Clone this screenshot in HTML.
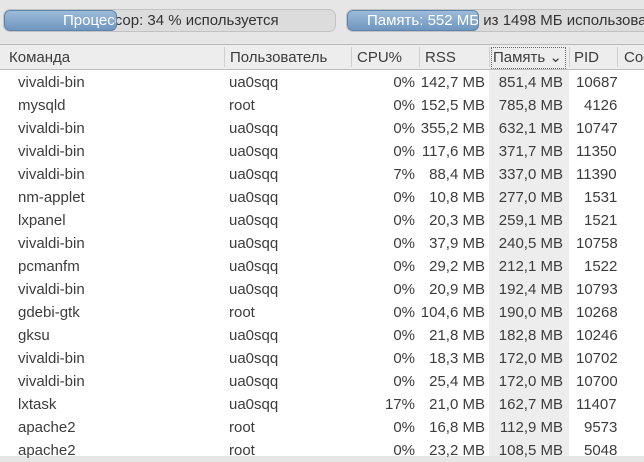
<!DOCTYPE html><html><head><meta charset="utf-8"><style>
body{margin:0;width:644px;height:455px;background:#e6e6e6;font-family:"Liberation Sans","DejaVu Sans",sans-serif;font-size:15px;color:#3c3c3c;overflow:hidden;position:relative}
.bar{position:absolute;top:9px;height:23px;border:1px solid #c2c2c2;border-radius:7px;background:#dcdcdc;overflow:hidden;box-sizing:border-box}
.fill{position:absolute;left:0;top:0;bottom:0;border-radius:6px;background:linear-gradient(#9dbbd9,#6f96bf);border:1px solid #5f84ad;box-sizing:border-box;overflow:hidden}
.lbl{position:absolute;top:2px;white-space:nowrap;color:#333}
.fill .lbl{color:#fff;top:1px}
.tbl{position:absolute;left:0;top:44px;width:644px;height:411px;background:#fff;border-top:1px solid #bbb}
.hdr{position:absolute;left:0;top:0;width:644px;height:24px;background:#ededed;border-bottom:1px solid #bdbdbd}
.h{position:absolute;top:4px}
.sep{position:absolute;top:2px;height:20px;border-left:1px solid #cfcfcf}
.sortbg{position:absolute;left:489px;width:80px;top:25px;bottom:0;background:#ededed}
.r{position:absolute;left:0;width:644px;height:23px}
.r span{position:absolute;top:3px;white-space:nowrap}
</style></head><body>
<div class="bar" style="left:3px;width:333px"><div class="lbl" style="left:59px">Процессор: 34 % используется</div><div class="fill" style="width:113px"><div class="lbl" style="left:58px">Процессор: 34 % используется</div></div></div>
<div class="bar" style="left:346px;width:310px"><div class="lbl" style="left:20px">Память: 552 МБ из 1498 МБ использовано</div><div class="fill" style="width:132px"><div class="lbl" style="left:19px">Память: 552 МБ из 1498 МБ использовано</div></div></div>
<div class="tbl">
<div class="sortbg"></div>
<div class="hdr">
<span class="h" style="left:9px">Команда</span>
<div class="sep" style="left:224px"></div><span class="h" style="left:230px">Пользователь</span>
<div class="sep" style="left:351px"></div><span class="h" style="left:357px">CPU%</span>
<div class="sep" style="left:419px"></div><span class="h" style="left:425px">RSS</span>
<div class="sep" style="left:489px"></div><span class="h" style="left:492px;outline:1px dotted #666;padding:0 3px 2px 1px;top:3px">Память ⌄</span>
<div class="sep" style="left:569px"></div><span class="h" style="left:574px">PID</span>
<div class="sep" style="left:617px"></div><span class="h" style="left:624px">Сос</span>
</div>
</div>
<div style="position:absolute;left:0;top:71px;width:644px">
<div class="r" style="top:0"><span style="left:18px">vivaldi-bin</span><span style="left:229px">ua0sqq</span><span style="right:229px">0%</span><span style="right:159px">142,7 MB</span><span style="right:81px">851,4 MB</span><span style="left:576px">10687</span></div>
<div class="r" style="top:23px"><span style="left:18px">mysqld</span><span style="left:229px">root</span><span style="right:229px">0%</span><span style="right:159px">152,5 MB</span><span style="right:81px">785,8 MB</span><span style="left:584px">4126</span></div>
<div class="r" style="top:46px"><span style="left:18px">vivaldi-bin</span><span style="left:229px">ua0sqq</span><span style="right:229px">0%</span><span style="right:159px">355,2 MB</span><span style="right:81px">632,1 MB</span><span style="left:576px">10747</span></div>
<div class="r" style="top:69px"><span style="left:18px">vivaldi-bin</span><span style="left:229px">ua0sqq</span><span style="right:229px">0%</span><span style="right:159px">117,6 MB</span><span style="right:81px">371,7 MB</span><span style="left:576px">11350</span></div>
<div class="r" style="top:92px"><span style="left:18px">vivaldi-bin</span><span style="left:229px">ua0sqq</span><span style="right:229px">7%</span><span style="right:159px">88,4 MB</span><span style="right:81px">337,0 MB</span><span style="left:576px">11390</span></div>
<div class="r" style="top:115px"><span style="left:18px">nm-applet</span><span style="left:229px">ua0sqq</span><span style="right:229px">0%</span><span style="right:159px">10,8 MB</span><span style="right:81px">277,0 MB</span><span style="left:584px">1531</span></div>
<div class="r" style="top:138px"><span style="left:18px">lxpanel</span><span style="left:229px">ua0sqq</span><span style="right:229px">0%</span><span style="right:159px">20,3 MB</span><span style="right:81px">259,1 MB</span><span style="left:584px">1521</span></div>
<div class="r" style="top:161px"><span style="left:18px">vivaldi-bin</span><span style="left:229px">ua0sqq</span><span style="right:229px">0%</span><span style="right:159px">37,9 MB</span><span style="right:81px">240,5 MB</span><span style="left:576px">10758</span></div>
<div class="r" style="top:184px"><span style="left:18px">pcmanfm</span><span style="left:229px">ua0sqq</span><span style="right:229px">0%</span><span style="right:159px">29,2 MB</span><span style="right:81px">212,1 MB</span><span style="left:584px">1522</span></div>
<div class="r" style="top:207px"><span style="left:18px">vivaldi-bin</span><span style="left:229px">ua0sqq</span><span style="right:229px">0%</span><span style="right:159px">20,9 MB</span><span style="right:81px">192,4 MB</span><span style="left:576px">10793</span></div>
<div class="r" style="top:230px"><span style="left:18px">gdebi-gtk</span><span style="left:229px">root</span><span style="right:229px">0%</span><span style="right:159px">104,6 MB</span><span style="right:81px">190,0 MB</span><span style="left:576px">10268</span></div>
<div class="r" style="top:253px"><span style="left:18px">gksu</span><span style="left:229px">ua0sqq</span><span style="right:229px">0%</span><span style="right:159px">21,8 MB</span><span style="right:81px">182,8 MB</span><span style="left:576px">10246</span></div>
<div class="r" style="top:276px"><span style="left:18px">vivaldi-bin</span><span style="left:229px">ua0sqq</span><span style="right:229px">0%</span><span style="right:159px">18,3 MB</span><span style="right:81px">172,0 MB</span><span style="left:576px">10702</span></div>
<div class="r" style="top:299px"><span style="left:18px">vivaldi-bin</span><span style="left:229px">ua0sqq</span><span style="right:229px">0%</span><span style="right:159px">25,4 MB</span><span style="right:81px">172,0 MB</span><span style="left:576px">10700</span></div>
<div class="r" style="top:322px"><span style="left:18px">lxtask</span><span style="left:229px">ua0sqq</span><span style="right:229px">17%</span><span style="right:159px">21,0 MB</span><span style="right:81px">162,7 MB</span><span style="left:576px">11407</span></div>
<div class="r" style="top:345px"><span style="left:18px">apache2</span><span style="left:229px">root</span><span style="right:229px">0%</span><span style="right:159px">16,8 MB</span><span style="right:81px">112,9 MB</span><span style="left:584px">9573</span></div>
<div class="r" style="top:368px"><span style="left:18px">apache2</span><span style="left:229px">root</span><span style="right:229px">0%</span><span style="right:159px">23,2 MB</span><span style="right:81px">108,5 MB</span><span style="left:584px">5048</span></div>
</div>
</body></html>
